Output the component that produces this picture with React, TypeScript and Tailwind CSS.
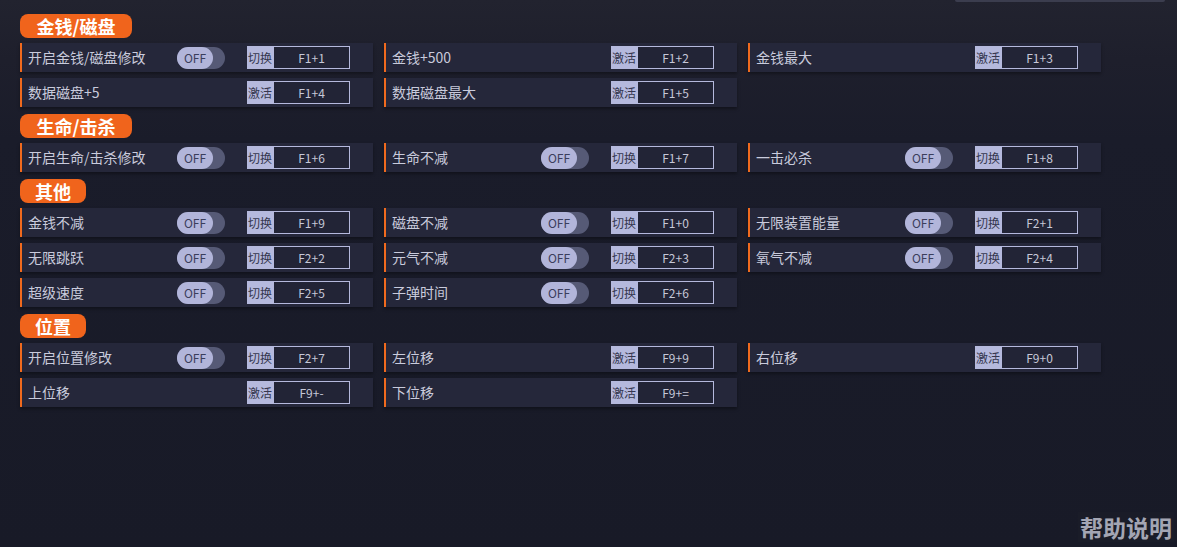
type Item = {
  label: string;
  toggle?: boolean;
  key: string;
};

type Section = {
  title: string;
  width: string;
  items: Item[];
};

const sections: Section[] = [
  {
    title: "金钱/磁盘",
    width: "w-[112px]",
    items: [
      { label: "开启金钱/磁盘修改", toggle: true, key: "F1+1" },
      { label: "金钱+500", key: "F1+2" },
      { label: "金钱最大", key: "F1+3" },
      { label: "数据磁盘+5", key: "F1+4" },
      { label: "数据磁盘最大", key: "F1+5" },
    ],
  },
  {
    title: "生命/击杀",
    width: "w-[112px]",
    items: [
      { label: "开启生命/击杀修改", toggle: true, key: "F1+6" },
      { label: "生命不减", toggle: true, key: "F1+7" },
      { label: "一击必杀", toggle: true, key: "F1+8" },
    ],
  },
  {
    title: "其他",
    width: "w-[66px]",
    items: [
      { label: "金钱不减", toggle: true, key: "F1+9" },
      { label: "磁盘不减", toggle: true, key: "F1+0" },
      { label: "无限装置能量", toggle: true, key: "F2+1" },
      { label: "无限跳跃", toggle: true, key: "F2+2" },
      { label: "元气不减", toggle: true, key: "F2+3" },
      { label: "氧气不减", toggle: true, key: "F2+4" },
      { label: "超级速度", toggle: true, key: "F2+5" },
      { label: "子弹时间", toggle: true, key: "F2+6" },
    ],
  },
  {
    title: "位置",
    width: "w-[66px]",
    items: [
      { label: "开启位置修改", toggle: true, key: "F2+7" },
      { label: "左位移", key: "F9+9" },
      { label: "右位移", key: "F9+0" },
      { label: "上位移", key: "F9+-" },
      { label: "下位移", key: "F9+=" },
    ],
  },
];

const Toggle = () => (
  <div className="flex h-[22px] w-[48px] rounded-full bg-[#565a76]">
    <div className="flex h-[22px] w-[36px] items-center justify-center rounded-full bg-[#b2b5da] text-[12px] text-[#3b3e5c]">
      OFF
    </div>
  </div>
);

const Row = ({ item }: { item: Item }) => (
  <div className="flex h-[29px] items-center border-l-2 border-[#f06a1e] bg-[#25273a] shadow-[0_2px_3px_rgba(0,0,0,0.35)]">
    <span className="ml-[6px] w-[149px] whitespace-nowrap text-[14px] text-[#c9cbdc]">
      {item.label}
    </span>
    <div className="w-[70px]">{item.toggle && <Toggle />}</div>
    <div className="flex h-[23px] items-stretch">
      <span className="flex w-[26px] items-center justify-center bg-[#b5b9dd] text-[12px] text-[#34374f]">
        {item.toggle ? "切换" : "激活"}
      </span>
      <span className="flex w-[77px] items-center justify-center border border-[#b5b9dd] bg-[#222436] text-[12px] text-[#c6c8d8]">
        {item.key}
      </span>
    </div>
  </div>
);

export default function App() {
  return (
    <div className="flex h-[547px] w-[1177px] flex-col overflow-hidden bg-[linear-gradient(180deg,#22232f_0px,#1e1f2c_60px,#1a1c2a_140px,#181a27_547px)] font-['Noto_Sans_CJK_SC','Noto_Sans',sans-serif]">
      <div className="flex justify-end pr-[12px]">
        <div className="h-[2px] w-[210px] rounded-b-md bg-[#3b3d4e]" />
      </div>
      <div className="flex flex-col gap-[7px] pl-[20px] pt-[12px]">
        {sections.map((s) => (
          <div key={s.title} className="flex flex-col gap-[5px]">
            <div
              className={`flex h-[24px] ${s.width} items-center justify-center rounded-lg bg-[#f0641c] text-[18px] font-bold leading-none text-white`}
            >
              {s.title}
            </div>
            <div className="grid w-[1081px] grid-cols-[353px_353px_353px] gap-x-[11px] gap-y-[6px]">
              {s.items.map((it) => (
                <Row key={it.label} item={it} />
              ))}
            </div>
          </div>
        ))}
      </div>
      <div className="mt-auto flex justify-end pb-[5px] pr-[3px]">
        <span className="bg-[#1a1c28] px-[2px] text-[23px] font-bold leading-[30px] text-[#a3a5b3]">
          帮助说明
        </span>
      </div>
    </div>
  );
}
